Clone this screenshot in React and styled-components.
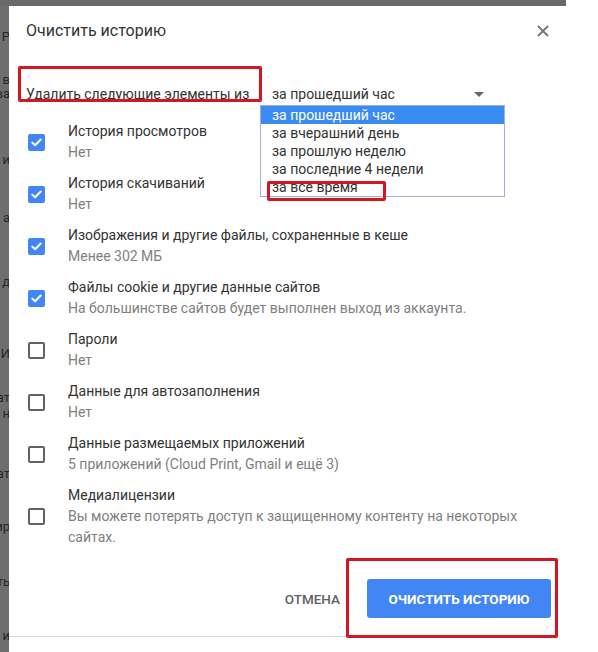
import React from 'react';
import styled, { createGlobalStyle } from 'styled-components';

const Global = createGlobalStyle`
  html, body {
    margin: 0;
    padding: 0;
    background: #fff;
  }
  body {
    font-family: Roboto, "Liberation Sans", sans-serif;
    color: #333;
  }
`;

const Frame = styled.div`
  display: grid;
  grid-template-columns: 9px 557px;
  grid-template-rows: 6px 646px;
  width: 598px;
  height: 652px;
  overflow: hidden;
`;

const TopBar = styled.div`
  grid-column: 1 / 3;
  background: #6a6a6a;
`;

const Backdrop = styled.div`
  position: relative;
  background: #6e6e6e;
  overflow: hidden;
`;

const Fragment = styled.span`
  position: absolute;
  right: -1px;
  top: ${p => p.$top}px;
  font-size: 13px;
  line-height: 16px;
  color: #262626;
  white-space: nowrap;
`;

const Dialog = styled.div`
  display: flex;
  flex-direction: column;
  background: #fff;
`;

const Header = styled.div`
  display: flex;
  align-items: center;
  justify-content: space-between;
  padding: 15px 16px 0 17px;
  height: 20px;
`;

const Title = styled.h1`
  margin: 0;
  font-size: 16px;
  font-weight: 400;
  line-height: 20px;
  color: #333;
`;

const Close = styled.button`
  border: 0;
  background: none;
  padding: 0;
  width: 14px;
  height: 14px;
  display: flex;
  cursor: pointer;
`;

const FromRow = styled.div`
  display: flex;
  align-items: center;
  margin-top: 43px;
  padding-left: 17px;
  height: 20px;
`;

const Label = styled.span`
  position: relative;
  width: 246px;
  font-size: 14px;
  line-height: 20px;
  white-space: nowrap;
`;

const Select = styled.div`
  position: relative;
  display: flex;
  align-items: center;
  justify-content: space-between;
  width: 212px;
  font-size: 14px;
  line-height: 20px;
`;

const Arrow = styled.span`
  width: 0;
  height: 0;
  border-left: 5px solid transparent;
  border-right: 5px solid transparent;
  border-top: 5px solid #666;
`;

const Menu = styled.ul`
  position: absolute;
  left: -12px;
  top: 21px;
  width: 243px;
  margin: 0;
  padding: 0;
  list-style: none;
  background: #fff;
  border: 1px solid #9fb1d4;
  z-index: 2;
`;

const Option = styled.li`
  height: 18px;
  line-height: 18px;
  padding-left: 11px;
  font-size: 14px;
  color: ${p => (p.$active ? '#fff' : '#333')};
  background: ${p => (p.$active ? '#3a8bf2' : 'transparent')};
`;

const Mark = styled.div`
  position: absolute;
  left: ${p => p.$x}px;
  top: ${p => p.$y}px;
  width: ${p => p.$w}px;
  height: ${p => p.$h}px;
  box-sizing: border-box;
  border: 3px solid #d3161f;
  border-radius: 2px;
  pointer-events: none;
  z-index: 3;
`;

const List = styled.div`
  display: flex;
  flex-direction: column;
  margin-top: 12px;
`;

const Row = styled.label`
  display: flex;
  align-items: center;
  gap: 23px;
  min-height: 42px;
  padding: 5px 0 5px 19px;
`;

const Box = styled.span`
  flex: none;
  box-sizing: border-box;
  width: 17px;
  height: 17px;
  border-radius: 2px;
  display: flex;
  align-items: center;
  justify-content: center;
  background: ${p => (p.$checked ? '#4285f4' : '#fff')};
  border: ${p => (p.$checked ? '0' : '2px solid #5f6368')};
`;

const Texts = styled.div`
  display: flex;
  flex-direction: column;
  font-size: 14px;
  line-height: 21px;
`;

const Name = styled.span`
  color: #333;
`;

const Note = styled.span`
  color: #808080;
  max-width: 470px;
`;

const Footer = styled.div`
  display: flex;
  justify-content: flex-end;
  align-items: center;
  gap: 19px;
  padding: 26px 15px 0 0;
`;

const TextButton = styled.button`
  border: 0;
  background: none;
  padding: 0 8px;
  font-family: inherit;
  font-size: 13.5px;
  font-weight: 500;
  color: #616161;
  cursor: pointer;
`;

const Primary = styled.button`
  position: relative;
  height: 39px;
  width: 184px;
  border: 0;
  border-radius: 3px;
  background: #4285f4;
  color: #fff;
  font-family: inherit;
  font-size: 13.5px;
  font-weight: 700;
  cursor: pointer;
`;

const Divider = styled.hr`
  margin: 18px 11px 0 0;
  border: 0;
  border-top: 1px solid #d9d9d9;
`;

const fragments = [
  { t: 'Р', y: 23 },
  { t: 'в', y: 66 },
  { t: 'ва', y: 80 },
  { t: 'и', y: 146 },
  { t: 'а', y: 204 },
  { t: 'д', y: 268 },
  { t: 'И', y: 340 },
  { t: 'ат', y: 384 },
  { t: 'н', y: 400 },
  { t: 'ат', y: 460 },
  { t: 'ир', y: 513 },
  { t: 'ть', y: 568 },
  { t: 'и', y: 622 },
];

const periods = [
  'за прошедший час',
  'за вчерашний день',
  'за прошлую неделю',
  'за последние 4 недели',
  'за все время',
];

const items = [
  { name: 'История просмотров', note: ['Нет'], checked: true },
  { name: 'История скачиваний', note: ['Нет'], checked: true },
  { name: 'Изображения и другие файлы, сохраненные в кеше', note: ['Менее 302 МБ'], checked: true },
  { name: 'Файлы cookie и другие данные сайтов', note: ['На большинстве сайтов будет выполнен выход из аккаунта.'], checked: true },
  { name: 'Пароли', note: ['Нет'], checked: false },
  { name: 'Данные для автозаполнения', note: ['Нет'], checked: false },
  { name: 'Данные размещаемых приложений', note: ['5 приложений (Cloud Print, Gmail и ещё 3)'], checked: false },
  { name: 'Медиалицензии', note: ['Вы можете потерять доступ к защищенному контенту на некоторых сайтах.'], checked: false },
];

const Check = () => (
  <svg width="11" height="9" viewBox="0 0 11 9">
    <path d="M1.3 4.6 L4.1 7.3 L9.7 1.5" fill="none" stroke="#fff" strokeWidth="2" strokeLinecap="round" strokeLinejoin="round" />
  </svg>
);

const App = () => (
  <>
    <Global />
    <Frame>
      <TopBar />
      <Backdrop>
        {fragments.map((f, i) => (
          <Fragment key={i} $top={f.y}>{f.t}</Fragment>
        ))}
      </Backdrop>
      <Dialog>
        <Header>
          <Title>Очистить историю</Title>
          <Close aria-label="Закрыть">
            <svg width="14" height="14" viewBox="0 0 14 14">
              <path d="M2 2 L12 12 M12 2 L2 12" stroke="#757575" strokeWidth="1.8" />
            </svg>
          </Close>
        </Header>

        <FromRow>
          <Label>
            Удалить следующие элементы из
            <Mark $x={-8} $y={-18} $w={244} $h={36} />
          </Label>
          <Select>
            <span>за прошедший час</span>
            <Arrow />
            <Menu>
              {periods.map((p, i) => (
                <Option key={p} $active={i === 0}>{p}</Option>
              ))}
              <Mark $x={6} $y={75} $w={119} $h={20} />
            </Menu>
          </Select>
        </FromRow>

        <List>
          {items.map(item => (
            <Row key={item.name}>
              <Box $checked={item.checked}>{item.checked && <Check />}</Box>
              <Texts>
                <Name>{item.name}</Name>
                {item.note.map(n => (
                  <Note key={n}>{n}</Note>
                ))}
              </Texts>
            </Row>
          ))}
        </List>

        <Footer>
          <TextButton>ОТМЕНА</TextButton>
          <Primary>
            ОЧИСТИТЬ ИСТОРИЮ
            <Mark $x={-21} $y={-21} $w={212} $h={80} />
          </Primary>
        </Footer>
        <Divider />
      </Dialog>
    </Frame>
  </>
);

export default App;
